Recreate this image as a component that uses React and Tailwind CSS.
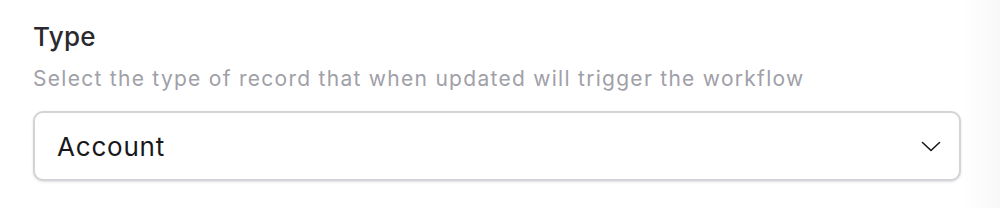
export default function App() {
  return (
    <div className="flex h-[208px] w-[1000px] bg-white" style={{ fontFamily: 'Inter, "Noto Sans", sans-serif' }}>
      <div className="flex-1 pl-[33px] pr-[2px] pt-[21px]">
        <label className="block text-[26px] leading-[32px] font-medium tracking-[0.3px] text-[#2a2a2e]">Type</label>
        <p className="mt-[13px] text-[21px] leading-[26px] tracking-[1.28px] text-[#a0a0a8]">
          Select the type of record that when updated will trigger the workflow
        </p>
        <button
          type="button"
          className="mt-[19px] flex h-[70px] w-[928px] items-center justify-between rounded-[10px] border-2 border-[#d4d4d8] bg-white pl-[22px] pr-[18px] shadow-sm"
        >
          <span className="text-[26px] tracking-[0.8px] text-[#18181b]">Account</span>
          <svg width="20" height="20" viewBox="0 0 20 20" fill="none" stroke="#18181b" strokeWidth="1.6" strokeLinecap="round" strokeLinejoin="round">
            <path d="M1.5 6.5l8.5 8 8.5-8" />
          </svg>
        </button>
      </div>
      <div className="w-[37px] bg-gradient-to-r from-white to-[#f8f8f8]" />
    </div>
  )
}
